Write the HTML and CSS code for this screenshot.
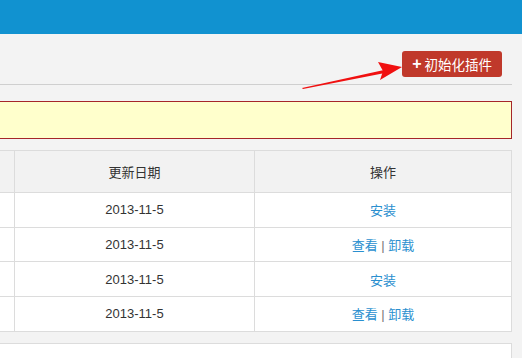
FILE: index.html
```html
<!DOCTYPE html>
<html lang="zh-CN">
<head>
    <meta charset="UTF-8">
    <title>插件管理</title>
    <link rel="stylesheet" href="styles.css">
</head>
<body>
    <div class="topbar"></div>

    <div class="main">
        <div class="toolbar">
            <a class="btn-init" href="#"><span class="plus">+</span> 初始化插件</a>
        </div>

        <div class="notice"></div>

        <table class="plugins">
            <thead>
                <tr>
                    <th class="col-name"></th>
                    <th class="col-date">更新日期</th>
                    <th class="col-op">操作</th>
                </tr>
            </thead>
            <tbody>
                <tr>
                    <td></td>
                    <td>2013-11-5</td>
                    <td><a href="#">安装</a></td>
                </tr>
                <tr>
                    <td></td>
                    <td>2013-11-5</td>
                    <td><a href="#">查看</a> <span class="sep">|</span> <a href="#">卸载</a></td>
                </tr>
                <tr>
                    <td></td>
                    <td>2013-11-5</td>
                    <td><a href="#">安装</a></td>
                </tr>
                <tr>
                    <td></td>
                    <td>2013-11-5</td>
                    <td><a href="#">查看</a> <span class="sep">|</span> <a href="#">卸载</a></td>
                </tr>
            </tbody>
        </table>

        <div class="panel"></div>
    </div>

    <svg class="arrow" width="120" height="40" viewBox="0 0 120 40">
        <polygon points="2,28 84,10 85,13 3,29" fill="#f01010"/>
        <polygon points="102,7 78,2 83,11 80,20" fill="#f01010"/>
    </svg>
</body>
</html>
```

FILE: styles.css
```css
body {
    margin: 0;
    background: #f3f3f3;
    font-family: 'Liberation Sans', 'Noto Sans CJK SC', sans-serif;
    font-size: 13px;
    color: #333;
    overflow: hidden;
}

.topbar {
    height: 34px;
    background: #1192d0;
}

.main {
    width: 612px;
    margin-left: -100px;
}

.toolbar {
    display: flex;
    justify-content: flex-end;
    padding: 17px 10px 7px 0;
    border-bottom: 1px solid #cfcfcf;
}

.btn-init {
    display: flex;
    align-items: center;
    height: 26px;
    padding: 0 10px;
    background: #c0392b;
    color: #fff;
    border-radius: 3px;
    text-decoration: none;
    font-size: 13.5px;
    font-family: 'Noto Sans CJK SC', sans-serif;
}

.btn-init .plus {
    font-weight: bold;
    font-size: 16px;
    margin-right: 3px;
    font-family: 'Liberation Sans', sans-serif;
}

.notice {
    margin-top: 16px;
    height: 36px;
    background: #ffffcc;
    border: 1px solid #a5262a;
}

.plugins {
    width: 100%;
    margin-top: 11px;
    border-collapse: collapse;
    background: #fff;
    border: 1px solid #dcdcdc;
}

.plugins th,
.plugins td {
    border: 1px solid #dcdcdc;
    text-align: center;
    padding: 0;
}

.plugins th {
    height: 41px;
    background: #f2f2f2;
    font-weight: normal;
    font-family: 'Noto Sans CJK SC', sans-serif;
    color: #333;
}

.plugins td {
    height: 33.7px;
}

.col-name { width: 113px; }
.col-date { width: 239px; }

.plugins a {
    color: #2a8fcf;
    text-decoration: none;
    font-family: 'Noto Sans CJK SC', sans-serif;
}

.sep {
    color: #777;
}

.panel {
    margin-top: 11px;
    height: 40px;
    background: #fff;
    border: 1px solid #dcdcdc;
}

.arrow {
    position: absolute;
    left: 300px;
    top: 60px;
}
```
